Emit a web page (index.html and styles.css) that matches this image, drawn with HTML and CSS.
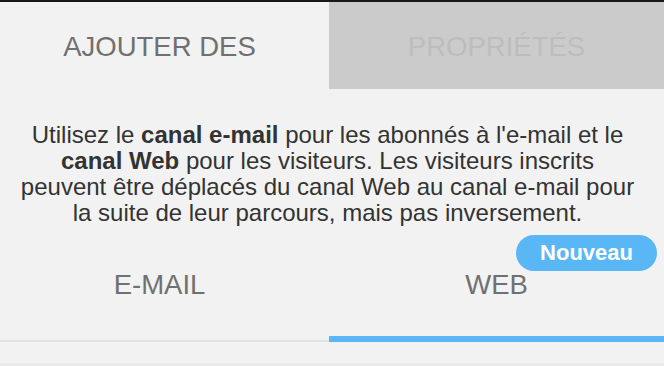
FILE: index.html
```html
<!DOCTYPE html>
<html lang="fr">
<head>
<meta charset="utf-8">
<title>Canaux</title>
<link rel="stylesheet" href="styles.css">
</head>
<body>
<div class="topbar"></div>

<div class="mainTabs">
  <div class="mainTab active">AJOUTER DES</div>
  <div class="mainTab">PROPRIÉTÉS</div>
</div>

<p class="intro">Utilisez le <b>canal e-mail</b> pour les abonnés à l'e-mail et le<br>
<b>canal Web</b> pour les visiteurs. Les visiteurs inscrits<br>
peuvent être déplacés du canal Web au canal e-mail pour<br>
la suite de leur parcours, mais pas inversement.</p>

<div class="channelTabs">
  <div class="channelTab">E-MAIL</div>
  <div class="channelTab selected">WEB<span class="badge">Nouveau</span></div>
</div>

<div class="list"></div>
<div class="footer"></div>
</body>
</html>
```

FILE: styles.css
```css
html, body {margin:0; padding:0;}
body {background-color:#f2f2f2; font-family:"Liberation Sans", Arial, Helvetica, sans-serif; width:664px; height:366px; overflow:hidden;}

.topbar {height:2px; background-color:#16181b;}

.mainTabs {display:flex; height:87px;}
.mainTab {display:flex; align-items:center; justify-content:center; font-size:27.5px; color:#bdbdbd; background-color:#cbcbcb; flex:1 1 335px; padding-top:3px; box-sizing:border-box;}
.mainTab.active {color:#707070; background-color:#f2f2f2; flex:0 0 329px; padding-right:10px;}

.intro {margin:33px 0 0 0; padding-right:9px; font-size:24px; line-height:26px; color:#333333; text-align:center; white-space:nowrap;}
.intro b {font-weight:bold;}

.channelTabs {display:flex; margin-top:9px;}
.channelTab {position:relative; flex:1 1 335px; height:107px; padding-top:34px; box-sizing:border-box; text-align:center; font-size:27.5px; line-height:32px; color:#707070; border-bottom:2px solid #e2e2e2;}
.channelTab:first-child {flex:0 0 329px; padding-right:10px; margin-bottom:2px;}
.channelTab.selected {border-bottom:6px solid #5ab7f5;}

.badge {position:absolute; top:0; right:7px; height:36px; line-height:36px; padding:0 24px; border-radius:18px; background-color:#5ab7f5; color:#ffffff; font-size:22px; font-weight:bold;}

.list {height:19px;}
.footer {height:10px; background-color:#e9e9e9;}
```
